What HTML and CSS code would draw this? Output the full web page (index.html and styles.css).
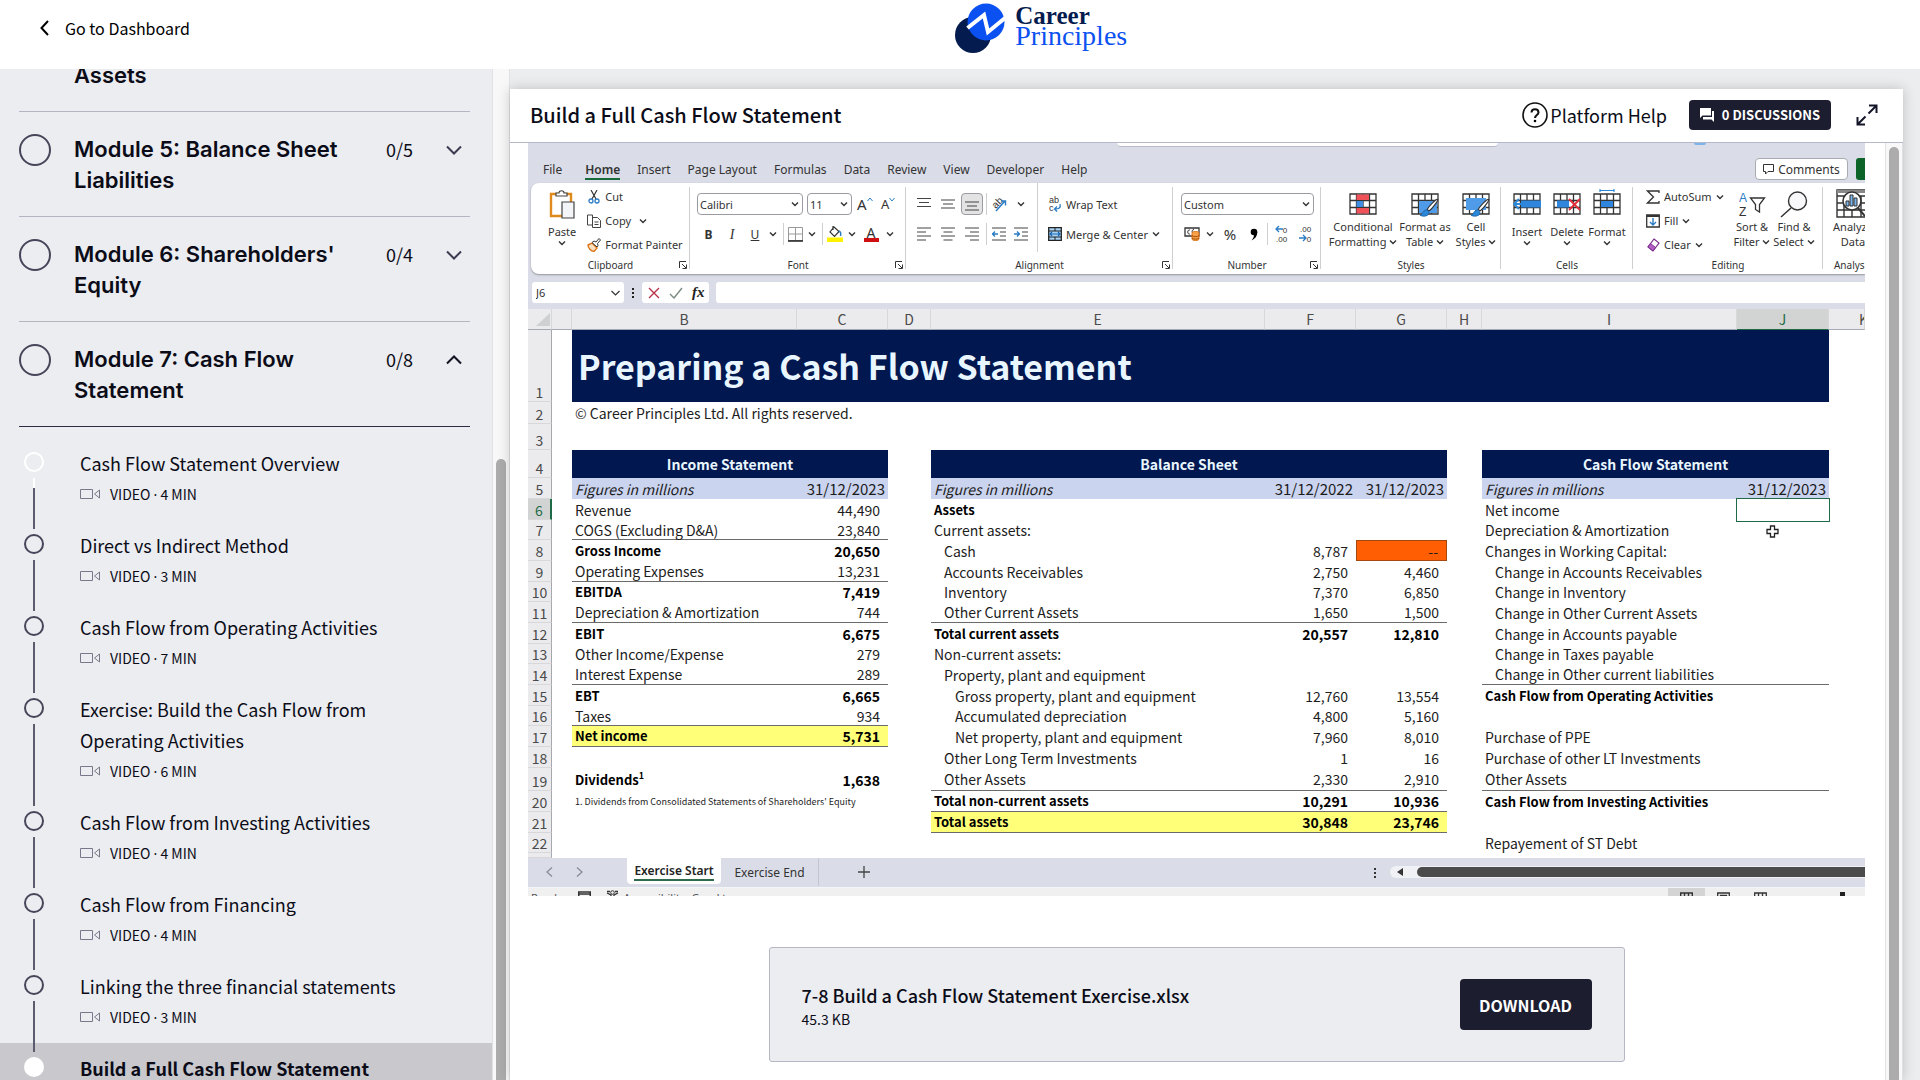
FILE: index.html
```html
<!DOCTYPE html>
<html lang="en">
<head>
<meta charset="utf-8">
<title>Build a Full Cash Flow Statement</title>
<link rel="stylesheet" href="styles.css">
</head>
<body>
<svg class="defs" aria-hidden="true">
  <symbol id="down" viewBox="0 0 8 8"><path d="M1 2.5 4 5.5 7 2.5" fill="none" stroke="#333" stroke-width="1.4"/></symbol>
  <symbol id="launch" viewBox="0 0 8 8"><path d="M.5 7V.5H7M3 3l4 4M7.5 3.5v4h-4" fill="none" stroke="#333"/></symbol>
  <symbol id="cam" viewBox="0 0 20 12"><path d="M.5 1.5h12v9H.5zM14.500 6l5-4v8z" fill="none" stroke="#77798a" stroke-linejoin="round"/></symbol>
  <symbol id="fold" viewBox="0 0 16 10"><path d="M1 1.500 8 8.500 15 1.500" fill="none" stroke="#3b3c52" stroke-width="2"/></symbol>
  <symbol id="grid" viewBox="0 0 28 22"><path d="M1 1h26v20H1zM1 7.500h26M1 14.500h26M7.500 1v20M14 1v20M20.500 1v20" fill="#fff" stroke="#333" stroke-width="1.300"/></symbol>
  <symbol id="brush" viewBox="0 0 20 20"><path d="M18.500 1c1 1-6 10-9 12l-2-1.500C9.500 8 17 0 18.500 1z" fill="#fff" stroke="#333" stroke-width="1.200"/><path d="M7 12c3 1 3 4 1 5.500S2 19 0 17.500c3 0 2-5 7-5.500z" fill="#2b88d8" stroke="#1b5f9e" stroke-width=".8"/></symbol>
</svg>

<header class="topbar">
  <a class="back" href="#dashboard">
    <svg width="9" height="16" viewBox="0 0 9 16"><path d="M8 1 1.500 8 8 15" fill="none" stroke="#000" stroke-width="2"/></svg>
    Go to Dashboard
  </a>
  <a class="brand" href="#home">
    <svg width="52" height="52" viewBox="0 0 52 52">
      <circle cx="19" cy="34" r="18" fill="#031b4e"/>
      <circle cx="32" cy="21" r="18.500" fill="#0b50f0"/>
      <path d="M13.500 27 30 14l4 17L51 17" fill="none" stroke="#fff" stroke-width="4"/>
    </svg>
    <span class="brand-name"><b>Career</b><span>Principles</span></span>
  </a>
</header>

<div class="shell">
  <nav class="sidebar" aria-label="Course modules">
    <div class="modules">
      <div class="module partial"><h2>Assets</h2></div>
      <div class="module"><i class="ring"></i><h2>Module 5: Balance Sheet Liabilities</h2><span class="count">0/5</span><svg class="fold" width="16" height="10"><use href="#fold"/></svg></div>
      <div class="module"><i class="ring"></i><h2>Module 6: Shareholders' Equity</h2><span class="count">0/4</span><svg class="fold" width="16" height="10"><use href="#fold"/></svg></div>
      <div class="module open"><i class="ring"></i><h2>Module 7: Cash Flow Statement</h2><span class="count">0/8</span><svg class="fold" width="16" height="10" viewBox="0 0 16 10"><path d="M1 8.500 8 1.500 15 8.500" fill="none" stroke="#111222" stroke-width="2"/></svg></div>
      <ol class="lessons">
        <li class="lesson first"><i class="dot"></i><a href="#l1">Cash Flow Statement Overview</a><p><svg width="20" height="12"><use href="#cam"/></svg><span>VIDEO <i>·</i> 4 MIN</span></p></li>
        <li class="lesson"><i class="dot"></i><a href="#l2">Direct vs Indirect Method</a><p><svg width="20" height="12"><use href="#cam"/></svg><span>VIDEO <i>·</i> 3 MIN</span></p></li>
        <li class="lesson"><i class="dot"></i><a href="#l3">Cash Flow from Operating Activities</a><p><svg width="20" height="12"><use href="#cam"/></svg><span>VIDEO <i>·</i> 7 MIN</span></p></li>
        <li class="lesson"><i class="dot"></i><a href="#l4">Exercise: Build the Cash Flow from Operating Activities</a><p><svg width="20" height="12"><use href="#cam"/></svg><span>VIDEO <i>·</i> 6 MIN</span></p></li>
        <li class="lesson"><i class="dot"></i><a href="#l5">Cash Flow from Investing Activities</a><p><svg width="20" height="12"><use href="#cam"/></svg><span>VIDEO <i>·</i> 4 MIN</span></p></li>
        <li class="lesson"><i class="dot"></i><a href="#l6">Cash Flow from Financing</a><p><svg width="20" height="12"><use href="#cam"/></svg><span>VIDEO <i>·</i> 4 MIN</span></p></li>
        <li class="lesson"><i class="dot"></i><a href="#l7">Linking the three financial statements</a><p><svg width="20" height="12"><use href="#cam"/></svg><span>VIDEO <i>·</i> 3 MIN</span></p></li>
        <li class="lesson current"><i class="dot"></i><a href="#l8">Build a Full Cash Flow Statement</a></li>
      </ol>
    </div>
  </nav>
  <div class="rail"><div class="thumb side-thumb"></div></div>

  <main class="content">
    <section class="card">
      <header class="card-head">
        <h1>Build a Full Cash Flow Statement</h1>
        <a class="help" href="#help"><svg width="26" height="26" viewBox="0 0 26 26"><circle cx="13" cy="13" r="12" fill="none" stroke="#111" stroke-width="1.600"/><path d="M9.500 10.500c0-4.500 7-4.500 7 0 0 2.500-3.500 2.500-3.500 5.500" fill="none" stroke="#111" stroke-width="2"/><circle cx="13" cy="19" r="1.300"/></svg>Platform Help</a>
        <button class="discuss" type="button"><svg width="14" height="14" viewBox="0 0 14 14"><path d="M0 0h11v7.500H2.500L0 10zM12 3h2v11l-2.500-2.500H3V9h9z" fill="#fff"/></svg>0 DISCUSSIONS</button>
        <button class="expand" type="button" aria-label="Full screen"><svg width="22" height="22" viewBox="0 0 22 22"><path d="M13 1.500h7.500V9M20 2l-7.500 7.500M1.500 13v7.500H9M2 20l7.500-7.500" fill="none" stroke="#15162a" stroke-width="2"/></svg></button>
      </header>
      <div class="card-body">
        <div class="lesson-pane">
          <div class="video">
            <div class="titlebar"><div class="searchbox"></div><div class="avatar"></div></div>
            <div class="tabs">
              <button type="button">File</button><button type="button" class="on">Home</button><button type="button">Insert</button><button type="button">Page Layout</button><button type="button">Formulas</button><button type="button">Data</button><button type="button">Review</button><button type="button">View</button><button type="button">Developer</button><button type="button">Help</button>
              <button type="button" class="comments"><svg width="11" height="11" viewBox="0 0 11 11"><path d="M.5.500h10v7H5L2.500 10V7.500h-2z" fill="none" stroke="#333"/></svg>Comments</button>
              <button type="button" class="share" aria-label="Share"></button>
            </div>

            <div class="ribbon">
              <div class="group clip">
                <div class="tools">
                  <button class="big" type="button"><svg width="26" height="29" viewBox="0 0 26 29"><path d="M2 4h20v22H2z" fill="#fff" stroke="#e08a1e" stroke-width="2.400"/><path d="M7 6V3h3c0-3 5-3 5 0h3v3z" fill="#fff" stroke="#444" stroke-width="1.200"/><path d="M13 12h12v16H13z" fill="#f4f5f8" stroke="#444" stroke-width="1.200"/></svg><span>Paste</span><svg width="8" height="8"><use href="#down"/></svg></button>
                  <div class="stack">
                    <button type="button"><svg width="14" height="14" viewBox="0 0 14 14"><path d="M4 0l5 9M10 0 5 9" stroke="#333" stroke-width="1.200" fill="none"/><g fill="none" stroke="#2b7cc4" stroke-width="1.300"><circle cx="4" cy="11" r="2"/><circle cx="10" cy="11" r="2"/></g></svg>Cut</button>
                    <button type="button"><svg width="14" height="14" viewBox="0 0 14 14"><path d="M.5 1h5v10h-5zM5.500 3.500h5l3 3V13.500h-8z" fill="#fff" stroke="#444"/><path d="M7.500 8h4M7.500 10.500h4" stroke="#444"/></svg>Copy<svg class="far" width="8" height="8"><use href="#down"/></svg></button>
                    <button type="button"><svg width="14" height="14" viewBox="0 0 14 14"><path d="M1 7l4-2 5 5-3 3.500C4 13 1 10 1 7z" fill="#fbe0bd" stroke="#d9741a" stroke-width="1.400"/><path d="M5 4.500l2-1.500 2 1 3-3.500 1.500 1.500-3 3.500.5 2-1 1.500z" fill="#fff" stroke="#333"/></svg>Format Painter</button>
                  </div>
                </div>
                <div class="caption">Clipboard<svg width="8" height="8"><use href="#launch"/></svg></div>
              </div>

              <div class="group font">
                <div class="rows">
                  <div class="row">
                    <label class="combo wide"><input type="text" value="Calibri" aria-label="Font"><svg width="8" height="8"><use href="#down"/></svg></label>
                    <label class="combo small"><input type="text" value="11" aria-label="Font size"><svg width="8" height="8"><use href="#down"/></svg></label>
                    <button class="letter" type="button">A<svg width="6" height="6" viewBox="0 0 6 6"><path d="M.5 4 3 1l2.500 3" fill="none" stroke="#2b7cc4"/></svg></button>
                    <button class="letter less" type="button">A<svg width="6" height="6" viewBox="0 0 6 6"><path d="M.5 1 3 4l2.500-3" fill="none" stroke="#2b7cc4"/></svg></button>
                  </div>
                  <div class="row font-grid">
                    <button type="button"><b>B</b></button><button type="button"><i class="ital">I</i></button><button type="button"><u>U</u></button><svg width="8" height="8"><use href="#down"/></svg><i class="bar"></i>
                    <button type="button" aria-label="Borders"><svg width="15" height="15" viewBox="0 0 15 15"><path d="M.5.500h14v13H.5zM7.500 0v14M0 7h15" fill="none" stroke="#999"/><path d="M0 14h15" stroke="#222" stroke-width="1.600"/></svg></button><svg width="8" height="8"><use href="#down"/></svg><i class="bar"></i>
                    <button type="button" aria-label="Fill colour"><svg width="16" height="16" viewBox="0 0 16 16"><path d="M7 1l5 4.500-4.500 5L3 6zM6 0v4" fill="#fff" stroke="#333" stroke-width="1.200"/><path d="M12 5c2 1 2 3 1.500 5" stroke="#2b7cc4" fill="none" stroke-width="1.500"/><path d="M0 11.500h16V16H0z" fill="#fff200"/></svg></button><svg width="8" height="8"><use href="#down"/></svg>
                    <button class="ink" type="button">A</button><svg width="8" height="8"><use href="#down"/></svg>
                  </div>
                </div>
                <div class="caption">Font<svg width="8" height="8"><use href="#launch"/></svg></div>
              </div>

              <div class="group align">
                <div class="tools">
                  <div class="rows">
                    <div class="row align-grid">
                      <button type="button" aria-label="Top"><svg width="14" height="14" viewBox="0 0 14 14"><path d="M0 1.500h14M2 5.500h10M0 9.500h14" stroke="#444" stroke-width="1.200"/></svg></button>
                      <button type="button" aria-label="Middle"><svg width="14" height="14" viewBox="0 0 14 14"><path d="M0 3h14M2 7h10M0 11h14" stroke="#444" stroke-width="1.200"/></svg></button>
                      <button type="button" class="pressed" aria-label="Bottom"><svg width="14" height="14" viewBox="0 0 14 14"><path d="M0 5h14M2 9h10M0 13h14" stroke="#444" stroke-width="1.200"/></svg></button>
                      <i class="bar"></i>
                      <button type="button" class="angle" aria-label="Orientation"><svg width="16" height="16" viewBox="0 0 16 16"><text x="1" y="12" font-size="10" transform="rotate(-45 4 8)" fill="#333">ab</text><path d="M5 15 14 5M10 5h4.500v4.500" fill="none" stroke="#2b7cc4" stroke-width="1.400"/></svg></button>
                      <svg width="8" height="8"><use href="#down"/></svg>
                    </div>
                    <div class="row align-grid">
                      <button type="button" aria-label="Left"><svg width="14" height="14" viewBox="0 0 14 14"><path d="M0 1h14M0 5h9M0 9h14M0 13h9" stroke="#444" stroke-width="1.200"/></svg></button>
                      <button type="button" aria-label="Centre"><svg width="14" height="14" viewBox="0 0 14 14"><path d="M0 1h14M2.500 5h9M0 9h14M2.500 13h9" stroke="#444" stroke-width="1.200"/></svg></button>
                      <button type="button" aria-label="Right"><svg width="14" height="14" viewBox="0 0 14 14"><path d="M0 1h14M5 5h9M0 9h14M5 13h9" stroke="#444" stroke-width="1.200"/></svg></button>
                      <i class="bar"></i>
                      <button type="button" aria-label="Outdent"><svg width="14" height="14" viewBox="0 0 14 14"><path d="M0 1h14M8 5h6M8 9h6M0 13h14" stroke="#444" stroke-width="1.200"/><path d="M6 7H1M3 4.500.5 7 3 9.500" fill="none" stroke="#2b7cc4" stroke-width="1.300"/></svg></button>
                      <button type="button" aria-label="Indent"><svg width="14" height="14" viewBox="0 0 14 14"><path d="M0 1h14M8 5h6M8 9h6M0 13h14" stroke="#444" stroke-width="1.200"/><path d="M0 7h5.500M3 4.500 5.500 7 3 9.500" fill="none" stroke="#2b7cc4" stroke-width="1.300"/></svg></button>
                    </div>
                  </div>
                  <div class="rows wraps">
                    <button class="row" type="button"><svg width="14" height="16" viewBox="0 0 14 16"><text x="1" y="7" font-size="9" fill="#333">ab</text><text x="1" y="15" font-size="9" fill="#333">c</text><path d="M12 8c1 4-1 5-5 5M9 10.500 6.500 13 9 15.500" fill="none" stroke="#2b7cc4" stroke-width="1.300"/></svg>Wrap Text</button>
                    <button class="row" type="button"><svg width="14" height="14" viewBox="0 0 14 14"><path d="M.7.700h12.600v12.600H.7z" fill="#a9d3f5" stroke="#222" stroke-width="1.300"/><path d="M.7 4h12.600M.7 10h12.600M7 1v3M7 10v3" stroke="#222"/><path d="M2 7h10M4 5 2 7l2 2M10 5l2 2-2 2" fill="none" stroke="#1b66b0" stroke-width="1.200"/></svg>Merge &amp; Center<svg width="8" height="8"><use href="#down"/></svg></button>
                  </div>
                </div>
                <div class="caption">Alignment<svg width="8" height="8"><use href="#launch"/></svg></div>
              </div>

              <div class="group number">
                <div class="rows">
                  <div class="row"><label class="combo format"><input type="text" value="Custom" aria-label="Number format"><svg width="8" height="8"><use href="#down"/></svg></label></div>
                  <div class="row number-grid">
                    <button type="button" aria-label="Accounting"><svg width="17" height="14" viewBox="0 0 17 14"><path d="M1 1h14v8H1z" fill="#fff" stroke="#333" stroke-width="1.300"/><path d="M6 3c-3-1-3 5 0 4M10 2.500c-3 0-2 4.500 0 4.500" fill="none" stroke="#333"/><path d="M8 6c0-2 7-2 7 0v6c0 2-7 2-7 0z" fill="#f7a24a" stroke="#d9741a"/><path d="M8 8.500c1 1.500 6 1.500 7 0M8 11c1 1.500 6 1.500 7 0" fill="none" stroke="#a34d06"/></svg></button>
                    <svg width="8" height="8"><use href="#down"/></svg><button class="pct" type="button">%</button><button type="button" aria-label="Comma"><svg width="8" height="13" viewBox="0 0 8 13"><circle cx="4" cy="4" r="3.300"/><path d="M7.300 4c0 4-2 7-6 8.500 2-2 3-4 2.500-6z"/></svg></button><i class="bar"></i>
                    <button type="button" class="dec"><svg width="8" height="8" viewBox="0 0 8 8"><path d="M8 4H1M4 1 1 4l3 3" fill="none" stroke="#2b7cc4" stroke-width="1.300"/></svg>0<br>.00</button>
                    <button type="button" class="dec">.00<br><svg width="8" height="8" viewBox="0 0 8 8"><path d="M0 4h7M4 1l3 3-3 3" fill="none" stroke="#2b7cc4" stroke-width="1.300"/></svg>0</button>
                  </div>
                </div>
                <div class="caption">Number<svg width="8" height="8"><use href="#launch"/></svg></div>
              </div>

              <div class="group styles">
                <div class="tools">
                  <button class="big" type="button"><svg width="28" height="22" viewBox="0 0 28 22"><use href="#grid"/><path d="M7.500 1.500H20V7H7.500zM7.500 15H20v5.500H7.500z" fill="#f0525a"/><path d="M7.500 8H14v6H7.500z" fill="#3f8de0"/></svg><span>Conditional<br>Formatting <svg width="8" height="8"><use href="#down"/></svg></span></button>
                  <button class="big" type="button"><svg width="28" height="26" viewBox="0 0 28 26"><svg width="28" height="22"><use href="#grid"/></svg><path d="M8 8h18v12H8z" fill="#4f9be8"/><svg x="9" y="5" width="19" height="20"><use href="#brush"/></svg></svg><span>Format as<br>Table <svg width="8" height="8"><use href="#down"/></svg></span></button>
                  <button class="big" type="button"><svg width="28" height="26" viewBox="0 0 28 26"><svg width="28" height="22"><use href="#grid"/></svg><path d="M4 5h20v12H4z" fill="#4f9be8"/><svg x="9" y="5" width="19" height="20"><use href="#brush"/></svg></svg><span>Cell<br>Styles <svg width="8" height="8"><use href="#down"/></svg></span></button>
                </div>
                <div class="caption">Styles</div>
              </div>

              <div class="group cells">
                <div class="tools">
                  <button class="big" type="button"><svg width="28" height="22" viewBox="0 0 28 22"><use href="#grid"/><path d="M8 7.500h20v7H8z" fill="#2f86dc"/><path d="M12 11H1M6 6l-5 5 5 5" fill="none" stroke="#2b88d8" stroke-width="1.800"/></svg><span>Insert</span><svg width="8" height="8"><use href="#down"/></svg></button>
                  <button class="big" type="button"><svg width="28" height="22" viewBox="0 0 28 22"><use href="#grid"/><path d="M4 7.500h12v7H4z" fill="#2f86dc"/><path d="M16 6l11 11M27 6 16 17" stroke="#e0303a" stroke-width="1.800"/></svg><span>Delete</span><svg width="8" height="8"><use href="#down"/></svg></button>
                  <button class="big" type="button"><svg width="28" height="26" viewBox="0 0 28 26"><svg y="4" width="28" height="22"><use href="#grid"/></svg><path d="M8 12h12v6H8z" fill="#2f86dc"/><path d="M7 1.500h14M7 0v3M21 0v3" stroke="#2b88d8" stroke-width="1.200"/></svg><span>Format</span><svg width="8" height="8"><use href="#down"/></svg></button>
                </div>
                <div class="caption">Cells</div>
              </div>

              <div class="group editing">
                <div class="tools">
                  <div class="stack">
                    <button type="button"><svg width="14" height="14" viewBox="0 0 14 14"><path d="M13 3V1H1.500l6 6-6 6H13v-2" fill="none" stroke="#333" stroke-width="1.300"/></svg>AutoSum<svg width="8" height="8"><use href="#down"/></svg></button>
                    <button type="button"><svg width="14" height="14" viewBox="0 0 14 14"><path d="M.7 1h12.600v12H.7z" fill="#fff" stroke="#333" stroke-width="1.300"/><path d="M1 2h12" stroke="#333" stroke-width="2"/><path d="M7 4v6.500M4 8l3 3 3-3" fill="none" stroke="#2b7cc4" stroke-width="1.400"/></svg>Fill<svg width="8" height="8"><use href="#down"/></svg></button>
                    <button type="button"><svg width="14" height="14" viewBox="0 0 14 14"><path d="M8 1l5 4-6 8-5-4z" fill="#fff" stroke="#7b2f8f" stroke-width="1.200"/><path d="M4.500 5.500l5 4L7 13l-5-4z" fill="#b45fc4" stroke="#7b2f8f"/></svg>Clear<svg width="8" height="8"><use href="#down"/></svg></button>
                  </div>
                  <button class="big" type="button"><svg width="28" height="26" viewBox="0 0 28 26"><text x="1" y="11" font-size="12" fill="#2b7cc4">A</text><text x="1" y="25" font-size="12" fill="#333">Z</text><path d="M12.500 7h14l-5 6.500V21l-4-2.500v-5z" fill="#fff" stroke="#333" stroke-width="1.300"/></svg><span>Sort &amp;<br>Filter <svg width="8" height="8"><use href="#down"/></svg></span></button>
                  <button class="big" type="button"><svg width="28" height="27" viewBox="0 0 28 27"><circle cx="17.500" cy="10" r="9" fill="#f8f8fa" stroke="#333" stroke-width="1.400"/><path d="M11 17 1 26" stroke="#333" stroke-width="1.500"/></svg><span>Find &amp;<br>Select <svg width="8" height="8"><use href="#down"/></svg></span></button>
                </div>
                <div class="caption">Editing</div>
              </div>

              <div class="group analysis">
                <div class="tools">
                  <button class="big" type="button"><svg width="34" height="29" viewBox="0 0 34 29"><path d="M1 1h32v27H1zM1 7h32M1 14h32M1 21h32M8 7v21M16 7v21M25 7v21" fill="#fff" stroke="#333" stroke-width="1.400"/><path d="M1 1h32v3H1z" fill="#888"/><circle cx="16" cy="12" r="9" fill="#fff" stroke="#333" stroke-width="1.600"/><path d="M10 12h3v5h-3zM14 6h3v11h-3zM18 9h3v8h-3z" fill="#7ab6ee" stroke="#333"/><path d="M22 19l7 8" stroke="#333" stroke-width="2"/></svg><span>Analyze<br>Data</span></button>
                </div>
                <div class="caption">Analysis</div>
              </div>
            </div>

            <div class="formula">
              <label class="name"><input type="text" value="J6" aria-label="Name box"><svg width="9" height="6" viewBox="0 0 9 6"><path d="M.5 1l4 4 4-4" fill="none" stroke="#333" stroke-width="1.200"/></svg></label>
              <svg width="4" height="12" viewBox="0 0 4 12"><path d="M2 1v2M2 5v2M2 9v2" stroke="#222" stroke-width="2"/></svg>
              <div class="fx"><svg width="12" height="12" viewBox="0 0 12 12"><path d="M1 1l10 10M11 1 1 11" stroke="#b8324a" stroke-width="1.400"/></svg><svg width="14" height="12" viewBox="0 0 14 12"><path d="M1 7l4 4 8-10" fill="none" stroke="#7a8a80" stroke-width="1.400"/></svg><span>fx</span></div>
              <input class="entry" type="text" aria-label="Formula">
            </div>

            <table class="sheet">
              <colgroup><col class="cn"><col class="ca"><col class="cb"><col class="cc"><col class="cd"><col class="ce"><col class="cc"><col class="cc"><col class="ch"><col class="ci"><col class="cj"><col class="ck"></colgroup>
              <thead><tr><th class="corner"><svg width="14" height="13" viewBox="0 0 14 13"><path d="M14 0v13H0z" fill="#cfd0d2"/></svg></th><th></th><th>B</th><th>C</th><th>D</th><th>E</th><th>F</th><th>G</th><th>H</th><th>I</th><th class="sel">J</th><th class="edge">K</th></tr></thead>
              <tbody>
              <tr class="r1"><th>1</th><td></td><td colspan="9" class="title">Preparing a Cash Flow Statement</td><td></td></tr>
              <tr class="r2"><th>2</th><td></td><td colspan="3">© Career Principles Ltd. All rights reserved.</td><td colspan="7"></td></tr>
              <tr class="r3"><th>3</th><td colspan="11"></td></tr>
              <tr class="r4"><th>4</th><td></td><td colspan="2" class="head">Income Statement</td><td></td><td colspan="3" class="head">Balance Sheet</td><td></td><td colspan="2" class="head">Cash Flow Statement</td><td></td></tr>
              <tr class="r5"><th>5</th><td></td><td class="fig">Figures in millions</td><td class="date">31/12/2023</td><td></td><td class="fig">Figures in millions</td><td class="date">31/12/2022</td><td class="date">31/12/2023</td><td></td><td class="fig">Figures in millions</td><td class="date">31/12/2023</td><td></td></tr>
              <tr><th class="sel">6</th><td></td><td>Revenue</td><td class="n">44,490</td><td></td><td class="b">Assets</td><td></td><td></td><td></td><td>Net income</td><td class="active"><span class="cursor"><svg width="13" height="13" viewBox="0 0 13 13"><path d="M4.500 1h4v3.500H12v4H8.500V12h-4V8.500H1v-4h3.500z" fill="#fff" stroke="#222" stroke-width="1.300"/></svg></span></td><td></td></tr>
              <tr><th>7</th><td></td><td class="ul">COGS (Excluding D&amp;A)</td><td class="n ul">23,840</td><td></td><td>Current assets:</td><td></td><td></td><td></td><td>Depreciation &amp; Amortization</td><td></td><td></td></tr>
              <tr><th>8</th><td></td><td class="b">Gross Income</td><td class="n b">20,650</td><td></td><td class="in1">Cash</td><td class="n">8,787</td><td class="n orange">--</td><td></td><td>Changes in Working Capital:</td><td></td><td></td></tr>
              <tr><th>9</th><td></td><td class="ul">Operating Expenses</td><td class="n ul">13,231</td><td></td><td class="in1">Accounts Receivables</td><td class="n">2,750</td><td class="n">4,460</td><td></td><td class="in1">Change in Accounts Receivables</td><td></td><td></td></tr>
              <tr><th>10</th><td></td><td class="b">EBITDA</td><td class="n b">7,419</td><td></td><td class="in1">Inventory</td><td class="n">7,370</td><td class="n">6,850</td><td></td><td class="in1">Change in Inventory</td><td></td><td></td></tr>
              <tr><th>11</th><td></td><td class="ul">Depreciation &amp; Amortization</td><td class="n ul">744</td><td></td><td class="in1 ul">Other Current Assets</td><td class="n ul">1,650</td><td class="n ul">1,500</td><td></td><td class="in1">Change in Other Current Assets</td><td></td><td></td></tr>
              <tr><th>12</th><td></td><td class="b">EBIT</td><td class="n b">6,675</td><td></td><td class="b">Total current assets</td><td class="n b">20,557</td><td class="n b">12,810</td><td></td><td class="in1">Change in Accounts payable</td><td></td><td></td></tr>
              <tr><th>13</th><td></td><td>Other Income/Expense</td><td class="n">279</td><td></td><td>Non-current assets:</td><td></td><td></td><td></td><td class="in1">Change in Taxes payable</td><td></td><td></td></tr>
              <tr><th>14</th><td></td><td class="ul">Interest Expense</td><td class="n ul">289</td><td></td><td class="in1">Property, plant and equipment</td><td></td><td></td><td></td><td class="in1 ul">Change in Other current liabilities</td><td class="ul"></td><td></td></tr>
              <tr><th>15</th><td></td><td class="b">EBT</td><td class="n b">6,665</td><td></td><td class="in2">Gross property, plant and equipment</td><td class="n">12,760</td><td class="n">13,554</td><td></td><td class="b">Cash Flow from Operating Activities</td><td></td><td></td></tr>
              <tr><th>16</th><td></td><td class="ul">Taxes</td><td class="n ul">934</td><td></td><td class="in2">Accumulated depreciation</td><td class="n">4,800</td><td class="n">5,160</td><td></td><td></td><td></td><td></td></tr>
              <tr><th>17</th><td></td><td class="b y ul">Net income</td><td class="n b y ul">5,731</td><td></td><td class="in2">Net property, plant and equipment</td><td class="n">7,960</td><td class="n">8,010</td><td></td><td>Purchase of PPE</td><td></td><td></td></tr>
              <tr><th>18</th><td></td><td></td><td></td><td></td><td class="in1">Other Long Term Investments</td><td class="n">1</td><td class="n">16</td><td></td><td>Purchase of other LT Investments</td><td></td><td></td></tr>
              <tr class="r19"><th>19</th><td></td><td class="b">Dividends<sup>1</sup></td><td class="n b">1,638</td><td></td><td class="in1 ul">Other Assets</td><td class="n ul">2,330</td><td class="n ul">2,910</td><td></td><td class="ul">Other Assets</td><td class="ul"></td><td></td></tr>
              <tr><th>20</th><td></td><td colspan="2" class="note">1. Dividends from Consolidated Statements of Shareholders' Equity</td><td></td><td class="b ul">Total non-current assets</td><td class="n b ul">10,291</td><td class="n b ul">10,936</td><td></td><td class="b">Cash Flow from Investing Activities</td><td></td><td></td></tr>
              <tr><th>21</th><td></td><td></td><td></td><td></td><td class="b y ul">Total assets</td><td class="n b y ul">30,848</td><td class="n b y ul">23,746</td><td></td><td></td><td></td><td></td></tr>
              <tr><th>22</th><td></td><td></td><td></td><td></td><td></td><td></td><td></td><td></td><td>Repayement of ST Debt</td><td></td><td></td></tr>
              <tr class="sliver"><th></th><td colspan="11"></td></tr>
              </tbody>
            </table>

            <div class="sheetbar">
              <button type="button" aria-label="Previous"><svg width="7" height="10" viewBox="0 0 7 10"><path d="M6 .5 1 5l5 4.500" fill="none" stroke="#8a8d96" stroke-width="1.300"/></svg></button>
              <button type="button" aria-label="Next"><svg width="7" height="10" viewBox="0 0 7 10"><path d="M1 .5 6 5 1 9.500" fill="none" stroke="#8a8d96" stroke-width="1.300"/></svg></button>
              <button type="button" class="sheet-tab on"><span>Exercise Start</span></button>
              <button type="button" class="sheet-tab">Exercise End</button>
              <button type="button" class="add" aria-label="Add sheet"><svg width="12" height="12" viewBox="0 0 12 12"><path d="M6 0v12M0 6h12" stroke="#444" stroke-width="1.300"/></svg></button>
              <svg class="dots" width="4" height="12" viewBox="0 0 4 12"><path d="M2 1v2M2 5v2M2 9v2" stroke="#333" stroke-width="2"/></svg>
              <div class="hscroll"><svg width="6" height="8" viewBox="0 0 6 8"><path d="M6 0v8L0 4z" fill="#333"/></svg><i></i></div>
            </div>
            <div class="status">
              <span>Ready</span>
              <svg width="13" height="10" viewBox="0 0 13 10"><path d="M.7 1h11.600v9H.7zM1 3h11" fill="none" stroke="#333" stroke-width="1.600"/></svg>
              <span class="access"><svg width="13" height="12" viewBox="0 0 13 12"><circle cx="6.500" cy="2.500" r="1.800" fill="none" stroke="#333"/><path d="M1 3l4 2v6M12 3 8 5v6M4 1.500H1M9 1.500h3" fill="none" stroke="#333" stroke-width="1.300"/></svg>Accessibility: Good to go</span>
              <div class="views"><i class="view on"><svg width="13" height="10" viewBox="0 0 13 10"><path d="M.7 1h11.600v9H.7zM.7 5h12M4.500 1v9M8.500 1v9" fill="none" stroke="#333" stroke-width="1.400"/></svg></i><i class="view"><svg width="13" height="10" viewBox="0 0 13 10"><path d="M.7 1h11.600v9H.7zM3.500 10V3.500h6V10" fill="none" stroke="#333" stroke-width="1.300"/></svg></i><i class="view"><svg width="13" height="10" viewBox="0 0 13 10"><path d="M.7 10V1h11.600v9M4.500 1v4h4V1" fill="none" stroke="#333" stroke-width="1.300"/></svg></i></div>
              <i class="zoom"></i>
            </div>
          </div>

          <section class="file">
            <div><h3>7-8 Build a Cash Flow Statement Exercise.xlsx</h3><p>45.3 KB</p></div>
            <button type="button">DOWNLOAD</button>
          </section>
        </div>
        <div class="rail"><div class="thumb body-thumb"></div></div>
      </div>
    </section>
  </main>
</div>
</body>
</html>
```
FILE: styles.css
```css
* { box-sizing: border-box; }
html, body { height: 100%; }
body {
  margin: 0;
  display: flex;
  flex-direction: column;
  overflow: hidden;
  background: #ebedef;
  color: #0b0c18;
  font-family: "Noto Sans CJK SC", sans-serif;
  font-size: 18px;
}
a { color: inherit; text-decoration: none; }
button { border: 0; padding: 0; margin: 0; background: none; font: inherit; color: inherit; }
h1, h2, h3, p, ol { margin: 0; padding: 0; font-weight: inherit; }
svg { display: block; flex: none; }
input { border: 0; padding: 0; background: none; font: inherit; color: inherit; min-width: 0; }
.defs { position: absolute; width: 0; height: 0; }

/* Top bar */
.topbar {
  flex: none;
  height: 69px;
  display: grid;
  grid-template-columns: 497fr 503fr;
  background: #fff;
}
.back { display: flex; gap: 16px; align-items: center; height: 56px; padding-left: 40px; font-size: 16px; color: #000; }
.brand { display: flex; justify-self: start; gap: 9px; padding-top: 1px; height: 54px; }
.brand-name { display: flex; flex-direction: column; font: 28px/20px "Liberation Serif", serif; color: #0b50f0; padding-top: 5px; }
.brand-name b { color: #031b4e; font-size: 25px; }

/* Layout */
.shell { flex: 1; min-height: 0; display: flex; }
.sidebar { flex: none; width: 492px; overflow: hidden; background: #ecedf0; }
.rail { flex: none; width: 18px; background: #f8f8f9; border: 1px solid #e0e1e4; border-width: 0 1px; display: flex; justify-content: center; }
.thumb { width: 10px; border-radius: 5px 5px 0 0; background: #acacac; }
.side-thumb { margin-top: 390px; }
.body-thumb { margin-top: 4px; }

/* Modules */
.modules { margin-top: -9px; }
.module {
  display: flex;
  align-items: flex-start;
  margin: 0 22px 0 19px;
  padding: 22px 0 20px;
  border-bottom: 1px solid #b3b5c3;
}
.module.partial { padding: 0 0 20px 55px; }
.module.open { border-color: #2c2d42; }
.module h2 { width: 280px; font: 600 22px/31px Inter, sans-serif; }
.ring { width: 32px; height: 32px; margin: 0 23px 0 0; border: 2px solid #45465a; border-radius: 50%; flex: none; }
.count { margin-left: 32px; width: 41px; line-height: 30px; }
.fold { margin: 11px 0 0 19px; }

/* Lessons */
.lessons { list-style: none; padding-top: 11px; }
.lesson { position: relative; padding: 10px 60px 11px 80px; min-height: 82px; }
.lesson a { display: block; line-height: 31px; font-size: 18px; }
.lesson p { display: flex; align-items: center; gap: 10px; height: 30px; line-height: 28px; font-size: 14px; }
.lesson p i { font-style: normal; font-family: "Noto Sans", sans-serif; }
.dot { position: absolute; left: 24px; top: 14px; width: 20px; height: 20px; border: 2px solid #45465a; border-radius: 50%; }
.lesson::after { content: ""; position: absolute; left: 33px; top: 40px; bottom: -9px; width: 2px; background: #5b5c6e; z-index: 1; }
.first .dot { border-color: #fff; }
.first::after { background: linear-gradient(#fff 10px, #5b5c6e 10px); }
.current { background: #c8c8cd; font-weight: 700; }
.current .dot { background: #fff; border-color: #fff; }
.current::after { display: none; }

/* Lesson card */
.content { flex: 1; min-width: 0; padding: 20px 17px 0 0; display: flex; }
.card { flex: 1; min-width: 0; display: flex; flex-direction: column; background: #fff; box-shadow: 0 0 12px #0003; }
.card-head { flex: none; height: 54px; display: flex; align-items: center; padding: 0 25px 2px 20px; border-bottom: 1px solid #b5b7cb; }
.card-head h1 { flex: 1; font-size: 20px; font-weight: 500; }
.help { display: flex; align-items: center; gap: 2px; font-size: 18px; }
.discuss { width: 142px; height: 30px; margin: 0 25px 0 22px; display: flex; align-items: center; justify-content: center; gap: 8px; border-radius: 4px; background: #1c1d2f; color: #fff; font-size: 13px; font-weight: 700; }
.card-body { flex: 1; min-height: 0; display: flex; }
.lesson-pane { flex: 1; min-width: 0; padding: 0 20px 0 18px; overflow: hidden; }

/* Video frame */
.video {
  aspect-ratio: 1337 / 753;
  overflow: hidden;
  background: #dadde8;
  font: 11px/15px "Noto Sans", sans-serif;
  color: #333;
}
.titlebar { display: flex; height: 15px; padding-left: 589px; align-items: flex-start; }
.searchbox { width: 381px; height: 4px; background: #fff; border-bottom: 1px solid #b9bcc8; border-radius: 0 0 4px 4px; }
.avatar { width: 12px; height: 2px; margin-left: 196px; background: #7db4ea; border-radius: 0 0 8px 8px; }
.tabs { display: flex; align-items: flex-start; gap: 17px; height: 25px; padding-left: 15px; font-size: 12px; }
.tabs button { height: 22px; white-space: nowrap; }
.tabs .on { margin-left: 6px; font-weight: 600; border-bottom: 2px solid #176b3a; padding-top: 2px; }
.tabs .comments { margin-left: auto; width: 93px; flex: none; display: flex; align-items: center; justify-content: center; gap: 4px; background: #fff; border: 1px solid #a9abb3; border-radius: 4px; }
.tabs .share { width: 9px; margin-left: -9px; background: #0c6428; border-radius: 3px 0 0 3px; }

.ribbon { display: flex; height: 91px; margin-left: 3px; background: #fff; border-radius: 8px 0 0 8px; box-shadow: 0 1px 2px #0005; overflow: hidden; }
.group { flex: none; display: flex; flex-direction: column; position: relative; }
.group::after { content: ""; position: absolute; right: 0; top: 4px; bottom: 5px; width: 1px; background: #cfcfd2; }
.caption { display: flex; justify-content: center; align-items: center; height: 18px; font-size: 10px; position: relative; }
.caption svg { position: absolute; right: 3px; top: 5px; }
.tools { display: flex; flex: 1; }
.rows { flex: 1; display: flex; flex-direction: column; gap: 8px; padding-top: 10px; }
.row { display: flex; align-items: center; height: 22px; gap: 4px; }
.big { display: flex; flex-direction: column; align-items: center; line-height: 15px; white-space: nowrap; }
.big > svg:first-child { margin-bottom: auto; }
.big span svg { display: inline-block; }
.stack { display: flex; flex-direction: column; gap: 9px; padding-top: 6px; }
.stack button { display: flex; align-items: center; gap: 4px; height: 15px; white-space: nowrap; }
.far { margin-left: 4px; }
.bar { justify-self: center; width: 1px; height: 22px; background: #cfcfd2; }
.group text { font-family: "Liberation Sans", sans-serif; }

.clip { width: 159px; }
.clip .tools { padding-left: 17px; gap: 11px; }
.clip .big { padding: 7px 0 9px; }
.font { width: 216px; padding-left: 7px; }
.font .caption { margin-left: -7px; }
.combo { display: flex; align-items: center; height: 22px; padding: 0 3px 0 2px; border: 1px solid #9b9ca3; border-radius: 4px; }
.combo input { flex: 1; width: 0; }
.wide { width: 106px; }
.small { width: 45px; margin-right: 1px; }
.letter { display: flex; width: 20px; font-size: 15px; }
.less { font-size: 13px; }
.font-grid { display: grid; gap: 0; justify-items: center; grid-template-columns: 23px 24px 22px 14px 6px 18px 16px 4px 22px 12px 26px 12px; font-size: 12px; }
.ital { font-family: "Liberation Serif", serif; font-size: 14px; }
.ink { width: 15px; height: 16px; line-height: 13px; font-size: 14px; border-bottom: 4px solid #d01010; }

.align { width: 267px; }
.align .rows { flex: none; width: 131px; }
.align-grid { display: grid; gap: 0; padding-left: 6px; justify-items: center; grid-template-columns: 24px 24px 24px 4px 22px 22px; }
.align-grid button { display: grid; place-items: center; width: 22px; height: 22px; }
.align-grid .pressed { background: #e3e3e3; border: 1px solid #9b9ca3; border-radius: 4px; }
.angle svg { overflow: visible; }
.align .wraps { width: 130px; padding-left: 10px; border-left: 1px solid #cfcfd2; margin-bottom: 4px; white-space: nowrap; }

.number { width: 148px; padding-left: 8px; }
.number .caption { margin-left: -8px; }
.format { width: 133px; }
.number-grid { display: grid; gap: 0; justify-items: center; grid-template-columns: 22px 14px 26px 22px 4px 24px 24px; }
.pct { font-size: 15px; }
.dec { font: 8px/9px "Liberation Sans", sans-serif; text-align: right; }
.dec svg { display: inline-block; }

.styles { width: 180px; }
.styles .tools { padding-left: 11px; }
.styles .big { padding: 10px 0 7px; width: 62px; }
.styles .big:last-child { width: 40px; }
.cells { width: 132px; }
.cells .tools { padding-left: 6px; }
.cells .big { padding: 10px 0 9px; width: 40px; }
.cells .big:last-child { padding-top: 6px; }
.editing { width: 190px; }
.editing .tools { padding-left: 13px; }
.editing .stack { width: 85px; }
.editing .big { width: 42px; padding: 8px 0 7px; }
.analysis { width: 60px; }
.analysis .tools { justify-content: center; }
.analysis .big { padding: 6px 0 7px; }

.formula { display: flex; align-items: center; gap: 7px; height: 21px; margin: 8px 0 6px 4px; }
.name { display: flex; align-items: center; width: 92px; height: 21px; padding: 0 4px; background: #fff; border-radius: 3px; }
.name input { flex: 1; width: 0; }
.fx { display: flex; align-items: center; gap: 9px; width: 67px; height: 21px; padding-left: 6px; background: #fff; border-radius: 3px; }
.fx span { font: italic 700 15px "Liberation Serif", serif; color: #222; }
.entry { flex: 1; height: 21px; background: #fff; border-radius: 3px 0 0 3px; }

/* Worksheet */
.sheet { width: 100%; table-layout: fixed; border-collapse: separate; border-spacing: 0; background: #fff; font: 14px/18px "Noto Sans CJK SC", sans-serif; color: #1d1d1d; }
.cn { width: 24px; } .ca { width: 20px; } .cb { width: 225px; } .cc { width: 91px; } .cd { width: 43px; }
.ce { width: 334px; } .ch { width: 35px; } .ci { width: 255px; } .cj { width: 92px; } .ck { width: 36px; }
.sheet tr { height: 21px; }
.sheet tbody tr:where(:nth-child(3n+1)) { height: 20px; }
.sheet td { padding: 0 3px; white-space: nowrap; position: relative; }
.sheet th { padding: 0; font-weight: 400; font-size: 14px; color: #4a4a4a; background: #ebebed; border-right: 1px solid #d8d8da; }
.sheet tbody th { border-right: 1px solid #a7a8ab; border-bottom: 1px solid #d8d8da; vertical-align: bottom; }
.sheet thead th { border-bottom: 1px solid #a3a9b5; }
.sheet .corner svg { margin-left: 8px; }
.sheet .edge { text-align: left; padding-left: 30px; overflow: hidden; }
.sheet th.sel { background: #d2d4d4; color: #1f6b47; border-bottom-color: #1f6b47; }
.sheet tbody th.sel { border-right: 2px solid #1f6b47; border-bottom-color: #d8d8da; }
.sheet .r1 { height: 72px; }
.sheet .r2 { height: 22px; }
.sheet .r3 { height: 26px; }
.sheet .r4 { height: 28px; }
.sheet .r19 { height: 23px; }
.sheet .sliver { height: 5px; line-height: 3px; }
.sheet .title { padding-left: 6px; background: #00174f; color: #e9f6ff; font-size: 34px; line-height: 40px; font-weight: 700; }
.sheet .head { background: #00174f; color: #e9f6ff; text-align: center; font-size: 14px; font-weight: 700; }
.fig, .date { background: #cbd4ef; }
.fig { font-style: italic; }
.sheet .date { text-align: right; font-size: 15px; }
.b { font-weight: 700; color: #000; font-size: 13px; }
.sheet .n { text-align: right; padding-right: 8px; font-size: 14px; }
.ul { border-bottom: 1px solid #6b6b6b; }
.y { background: #ffff78; }
.sheet .orange { background: #ff5f02; border: 1px solid #a5480f; }
.sheet .in1 { padding-left: 13px; }
.sheet .in2 { padding-left: 24px; }
.sheet .note { font-size: 9px; }
.sheet sup { font-size: 9px; line-height: 0; vertical-align: 6px; }
.active::after { content: ""; position: absolute; inset: -1px -1px -2px -1px; border: 1px solid #1f6b47; }
.cursor { position: absolute; left: 29px; top: 26px; z-index: 1; }

.sheetbar { display: flex; align-items: flex-start; height: 30px; padding-left: 18px; border-bottom: 1px solid #f4f5f8; font-size: 12px; }
.sheetbar button { height: 28px; width: 30px; flex: none; text-align: left; }
.sheetbar .sheet-tab { width: 98px; border-right: 1px solid #c3c6d1; text-align: center; }
.sheetbar .sheet-tab.on { width: 94px; margin-left: 21px; background: #fff; border: 0; border-radius: 0 0 4px 4px; height: 26px; font-weight: 600; color: #222; }
.sheet-tab.on span { display: inline-block; border-bottom: 2px solid #2f6b4c; line-height: 17px; }
.sheetbar .add { margin-left: 39px; }
.dots { margin: 9px 13px 0 auto; }
.hscroll { width: 36%; height: 12px; margin-top: 8px; padding-left: 7px; display: flex; align-items: center; gap: 14px; background: #f0f1f5; border-radius: 6px 0 0 6px; }
.hscroll i { flex: 1; height: 10px; background: #4b4b4b; border-radius: 5px 0 0 5px; }
.status { display: flex; align-items: flex-start; gap: 15px; height: 24px; padding-left: 3px; background: #f0f0f1; color: #555; }
.status > svg, .status .access svg { margin-top: 3px; }
.status span { padding-top: 2px; }
.status .access { display: flex; gap: 5px; padding-top: 2px; }
.status .access svg { margin-top: 0; }
.views { display: flex; margin-left: auto; }
.view { display: flex; justify-content: center; width: 37px; height: 24px; padding-top: 4px; }
.view.on { background: #d4d4d4; }
.zoom { width: 5px; height: 16px; margin: 4px 20px 0 46px; background: #222; }

/* Download */
.file { max-width: 856px; min-height: 115px; margin: 51px auto 0; padding: 0 32px; display: flex; align-items: center; justify-content: space-between; background: #ecedf0; border: 1px solid #b5b7c3; border-radius: 3px; }
.file h3 { font-size: 18px; line-height: 28px; font-weight: 500; }
.file p { font-size: 14px; line-height: 20px; }
.file button { width: 132px; height: 51px; border-radius: 4px; background: #1c1d2f; color: #fff; font-size: 16px; font-weight: 700; }
```
